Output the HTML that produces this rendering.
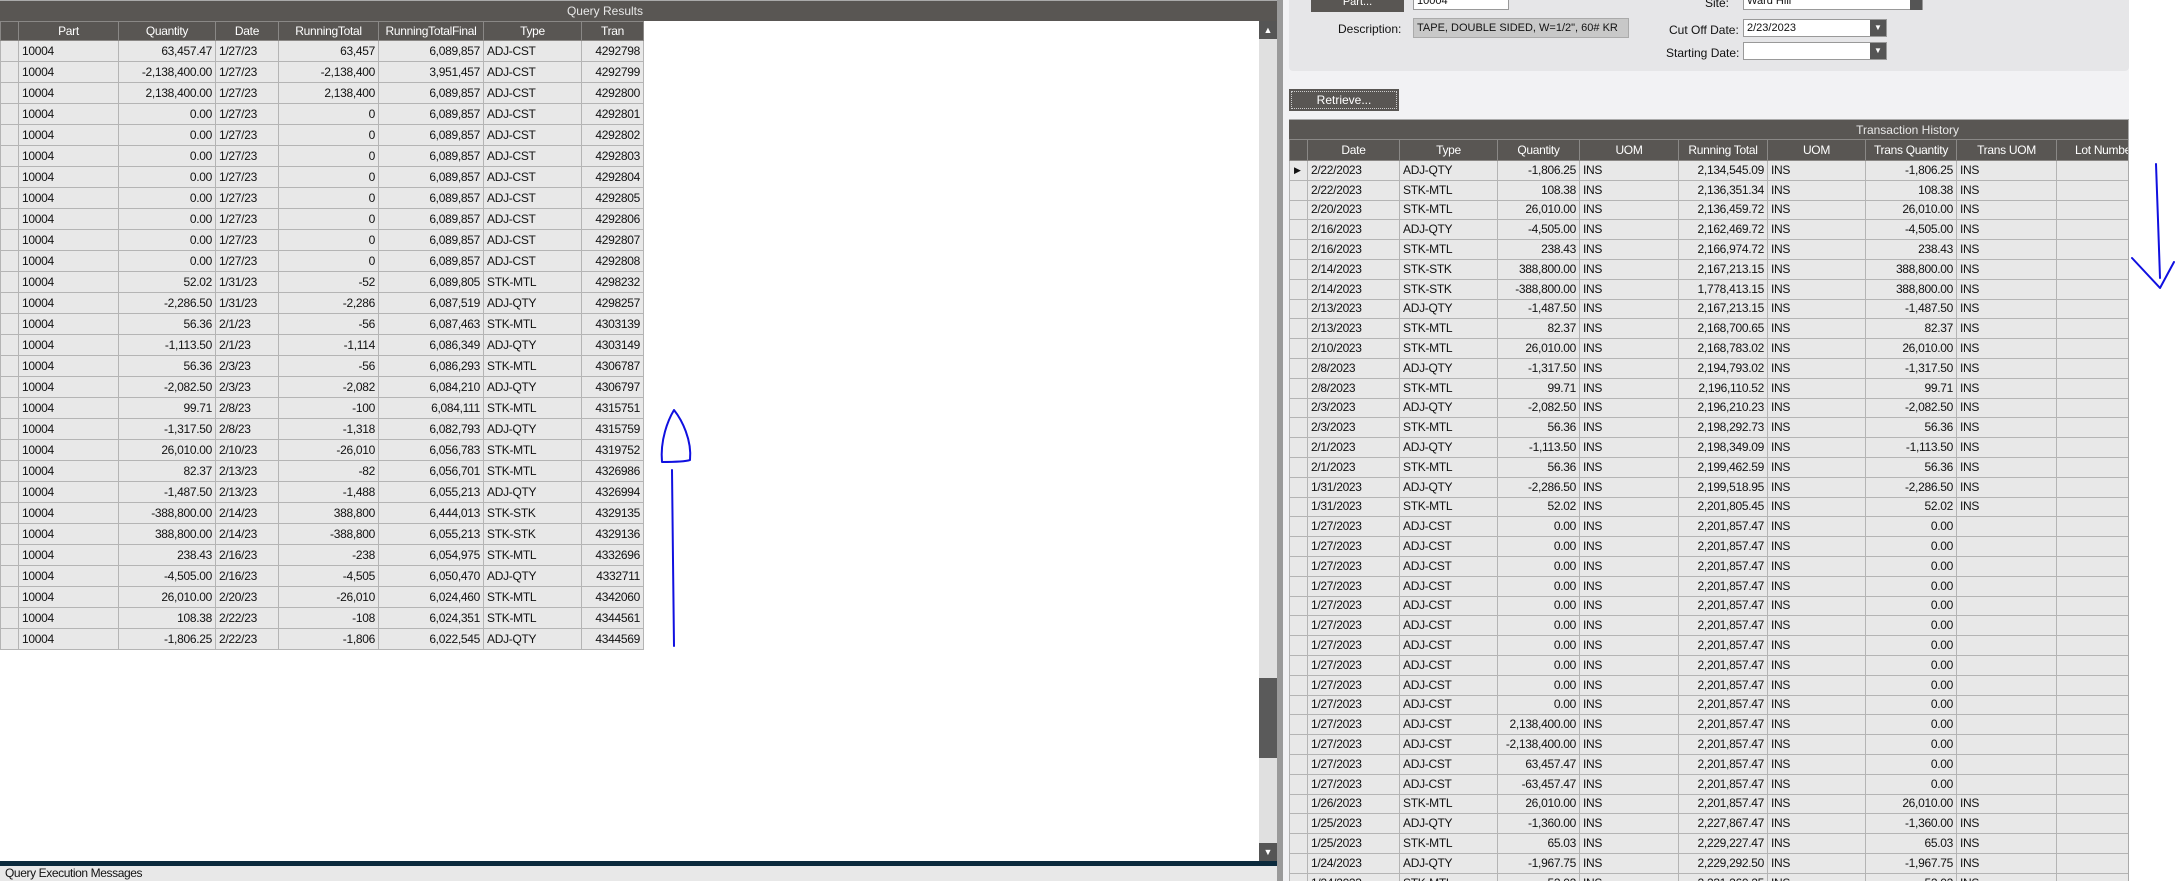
<!DOCTYPE html>
<html><head><meta charset="utf-8"><style>
*{margin:0;padding:0;box-sizing:border-box}
html,body{width:2178px;height:881px;overflow:hidden;background:#fff}
#w{position:relative;width:2178px;height:881px;overflow:hidden;font-family:"Liberation Sans",Arial,sans-serif;font-size:12px;color:#111}
.abs{position:absolute}
table{border-collapse:collapse;table-layout:fixed;position:absolute}
td,th{height:21px;line-height:18px;border:1px solid #b4b4b4;white-space:nowrap;overflow:hidden;padding:0 3px;font-weight:normal;letter-spacing:-0.3px}
th{background:#595653;color:#fff;border-color:#8a8886;text-align:center;height:19px;line-height:17px}
td{background:#e8e8e8}
td.r{text-align:right}
#rt td{height:19.8px;line-height:17px}
#rt th{height:21px}
.title{background:#595653;color:#e8e8e8;text-align:right;font-size:12px}
</style></head><body><div id="w">

<!-- LEFT PANEL -->
<div class="abs title" style="left:0;top:0;width:1278px;height:21px;line-height:21px;padding-right:635px;border-top:1px solid #aaa">Query Results</div>
<table style="left:0;top:21px;width:643px">
<colgroup><col style="width:18px"><col style="width:100px"><col style="width:97px"><col style="width:63px"><col style="width:100px"><col style="width:105px"><col style="width:98px"><col style="width:62px"></colgroup>
<tr><th style="border-right:none"></th><th>Part</th><th>Quantity</th><th>Date</th><th>RunningTotal</th><th>RunningTotalFinal</th><th>Type</th><th>Tran</th></tr>
<tr><td></td><td>10004</td><td class="r">63,457.47</td><td>1/27/23</td><td class="r">63,457</td><td class="r">6,089,857</td><td>ADJ-CST</td><td class="r">4292798</td></tr>
<tr><td></td><td>10004</td><td class="r">-2,138,400.00</td><td>1/27/23</td><td class="r">-2,138,400</td><td class="r">3,951,457</td><td>ADJ-CST</td><td class="r">4292799</td></tr>
<tr><td></td><td>10004</td><td class="r">2,138,400.00</td><td>1/27/23</td><td class="r">2,138,400</td><td class="r">6,089,857</td><td>ADJ-CST</td><td class="r">4292800</td></tr>
<tr><td></td><td>10004</td><td class="r">0.00</td><td>1/27/23</td><td class="r">0</td><td class="r">6,089,857</td><td>ADJ-CST</td><td class="r">4292801</td></tr>
<tr><td></td><td>10004</td><td class="r">0.00</td><td>1/27/23</td><td class="r">0</td><td class="r">6,089,857</td><td>ADJ-CST</td><td class="r">4292802</td></tr>
<tr><td></td><td>10004</td><td class="r">0.00</td><td>1/27/23</td><td class="r">0</td><td class="r">6,089,857</td><td>ADJ-CST</td><td class="r">4292803</td></tr>
<tr><td></td><td>10004</td><td class="r">0.00</td><td>1/27/23</td><td class="r">0</td><td class="r">6,089,857</td><td>ADJ-CST</td><td class="r">4292804</td></tr>
<tr><td></td><td>10004</td><td class="r">0.00</td><td>1/27/23</td><td class="r">0</td><td class="r">6,089,857</td><td>ADJ-CST</td><td class="r">4292805</td></tr>
<tr><td></td><td>10004</td><td class="r">0.00</td><td>1/27/23</td><td class="r">0</td><td class="r">6,089,857</td><td>ADJ-CST</td><td class="r">4292806</td></tr>
<tr><td></td><td>10004</td><td class="r">0.00</td><td>1/27/23</td><td class="r">0</td><td class="r">6,089,857</td><td>ADJ-CST</td><td class="r">4292807</td></tr>
<tr><td></td><td>10004</td><td class="r">0.00</td><td>1/27/23</td><td class="r">0</td><td class="r">6,089,857</td><td>ADJ-CST</td><td class="r">4292808</td></tr>
<tr><td></td><td>10004</td><td class="r">52.02</td><td>1/31/23</td><td class="r">-52</td><td class="r">6,089,805</td><td>STK-MTL</td><td class="r">4298232</td></tr>
<tr><td></td><td>10004</td><td class="r">-2,286.50</td><td>1/31/23</td><td class="r">-2,286</td><td class="r">6,087,519</td><td>ADJ-QTY</td><td class="r">4298257</td></tr>
<tr><td></td><td>10004</td><td class="r">56.36</td><td>2/1/23</td><td class="r">-56</td><td class="r">6,087,463</td><td>STK-MTL</td><td class="r">4303139</td></tr>
<tr><td></td><td>10004</td><td class="r">-1,113.50</td><td>2/1/23</td><td class="r">-1,114</td><td class="r">6,086,349</td><td>ADJ-QTY</td><td class="r">4303149</td></tr>
<tr><td></td><td>10004</td><td class="r">56.36</td><td>2/3/23</td><td class="r">-56</td><td class="r">6,086,293</td><td>STK-MTL</td><td class="r">4306787</td></tr>
<tr><td></td><td>10004</td><td class="r">-2,082.50</td><td>2/3/23</td><td class="r">-2,082</td><td class="r">6,084,210</td><td>ADJ-QTY</td><td class="r">4306797</td></tr>
<tr><td></td><td>10004</td><td class="r">99.71</td><td>2/8/23</td><td class="r">-100</td><td class="r">6,084,111</td><td>STK-MTL</td><td class="r">4315751</td></tr>
<tr><td></td><td>10004</td><td class="r">-1,317.50</td><td>2/8/23</td><td class="r">-1,318</td><td class="r">6,082,793</td><td>ADJ-QTY</td><td class="r">4315759</td></tr>
<tr><td></td><td>10004</td><td class="r">26,010.00</td><td>2/10/23</td><td class="r">-26,010</td><td class="r">6,056,783</td><td>STK-MTL</td><td class="r">4319752</td></tr>
<tr><td></td><td>10004</td><td class="r">82.37</td><td>2/13/23</td><td class="r">-82</td><td class="r">6,056,701</td><td>STK-MTL</td><td class="r">4326986</td></tr>
<tr><td></td><td>10004</td><td class="r">-1,487.50</td><td>2/13/23</td><td class="r">-1,488</td><td class="r">6,055,213</td><td>ADJ-QTY</td><td class="r">4326994</td></tr>
<tr><td></td><td>10004</td><td class="r">-388,800.00</td><td>2/14/23</td><td class="r">388,800</td><td class="r">6,444,013</td><td>STK-STK</td><td class="r">4329135</td></tr>
<tr><td></td><td>10004</td><td class="r">388,800.00</td><td>2/14/23</td><td class="r">-388,800</td><td class="r">6,055,213</td><td>STK-STK</td><td class="r">4329136</td></tr>
<tr><td></td><td>10004</td><td class="r">238.43</td><td>2/16/23</td><td class="r">-238</td><td class="r">6,054,975</td><td>STK-MTL</td><td class="r">4332696</td></tr>
<tr><td></td><td>10004</td><td class="r">-4,505.00</td><td>2/16/23</td><td class="r">-4,505</td><td class="r">6,050,470</td><td>ADJ-QTY</td><td class="r">4332711</td></tr>
<tr><td></td><td>10004</td><td class="r">26,010.00</td><td>2/20/23</td><td class="r">-26,010</td><td class="r">6,024,460</td><td>STK-MTL</td><td class="r">4342060</td></tr>
<tr><td></td><td>10004</td><td class="r">108.38</td><td>2/22/23</td><td class="r">-108</td><td class="r">6,024,351</td><td>STK-MTL</td><td class="r">4344561</td></tr>
<tr><td></td><td>10004</td><td class="r">-1,806.25</td><td>2/22/23</td><td class="r">-1,806</td><td class="r">6,022,545</td><td>ADJ-QTY</td><td class="r">4344569</td></tr>
</table>
<!-- scrollbar -->
<div class="abs" style="left:1259px;top:21px;width:18px;height:842px;background:#e0e0e0"></div>
<div class="abs" style="left:1259px;top:21px;width:18px;height:18px;background:#555;color:#fff;font-size:9px;text-align:center;line-height:18px">▲</div>
<div class="abs" style="left:1259px;top:678px;width:18px;height:80px;background:#5a5a5a"></div>
<div class="abs" style="left:1259px;top:843px;width:18px;height:18px;background:#555;color:#fff;font-size:9px;text-align:center;line-height:18px">▼</div>
<div class="abs" style="left:0;top:861px;width:1278px;height:5px;background:#0b2a3c"></div>
<div class="abs" style="left:0;top:866px;width:1278px;height:15px;background:#e8e8e8;font-size:12px;line-height:15px;padding-left:5px;letter-spacing:-0.4px">Query Execution Messages</div>

<!-- RIGHT PANEL -->
<div class="abs" style="left:1278px;top:0;width:900px;height:881px;background:#f2f2f4"></div>
<div class="abs" style="left:1277px;top:0;width:6px;height:881px;background:#9a9a9a"></div>
<div class="abs" style="left:1289px;top:0;width:840px;height:71px;background:#e6e6e8;border-radius:0 0 4px 4px"></div>
<div class="abs" style="left:1311px;top:0;width:93px;height:12px;background:#595653;color:#fff;text-align:center;font-size:11px;line-height:4px">Part...</div>
<div class="abs" style="left:1413px;top:-2px;width:96px;height:12px;background:#fff;border:1px solid #999;font-size:11px;line-height:4px;padding-left:3px">10004</div>
<div class="abs" style="left:1705px;top:-4px;font-size:12px">Site:</div>
<div class="abs" style="left:1743px;top:-2px;width:180px;height:12px;background:#fff;border:1px solid #999;font-size:11px;line-height:4px;padding-left:3px">Ward Hill</div>
<div class="abs" style="left:1910px;top:0;width:12px;height:10px;background:#555"></div>
<div class="abs" style="left:1338px;top:22px;font-size:12px">Description:</div>
<div class="abs" style="left:1413px;top:18px;width:216px;height:20px;background:#c8c8c8;border:1px solid #aaa;font-size:11px;line-height:18px;padding-left:3px">TAPE, DOUBLE SIDED, W=1/2", 60# KR</div>
<div class="abs" style="left:1669px;top:23px;font-size:12px">Cut Off Date:</div>
<div class="abs" style="left:1743px;top:19px;width:144px;height:18px;background:#fff;border:1px solid #999;font-size:11px;line-height:16px;padding-left:3px">2/23/2023</div>
<div class="abs" style="left:1870px;top:20px;width:16px;height:16px;background:#555;color:#fff;font-size:8px;text-align:center;line-height:16px">▼</div>
<div class="abs" style="left:1666px;top:46px;font-size:12px">Starting Date:</div>
<div class="abs" style="left:1743px;top:42px;width:144px;height:18px;background:#fff;border:1px solid #999"></div>
<div class="abs" style="left:1870px;top:43px;width:16px;height:16px;background:#555;color:#fff;font-size:8px;text-align:center;line-height:16px">▼</div>
<div class="abs" style="left:1289px;top:89px;width:110px;height:22px;background:#595653;color:#fff;text-align:center;font-size:12px;line-height:22px;outline:1px dotted #ccc;outline-offset:-3px">Retrieve...</div>
<div class="abs title" style="left:1289px;top:119px;width:840px;height:20px;line-height:20px;padding-right:170px;border-top:1px solid #aaa">Transaction History</div>
<div class="abs" style="left:1289px;top:139px;width:840px;height:742px;overflow:hidden">
<table id="rt" style="left:0;top:0;width:866px">
<colgroup><col style="width:18px"><col style="width:92px"><col style="width:98px"><col style="width:82px"><col style="width:99px"><col style="width:89px"><col style="width:98px"><col style="width:91px"><col style="width:100px"><col style="width:99px"></colgroup>
<tr><th style="border-right:none"></th><th>Date</th><th>Type</th><th>Quantity</th><th>UOM</th><th>Running Total</th><th>UOM</th><th>Trans Quantity</th><th>Trans UOM</th><th style="text-align:left;padding-left:18px">Lot Number</th></tr>
<tr><td style="font-size:9px;padding:0 4px">▶</td><td>2/22/2023</td><td>ADJ-QTY</td><td class="r">-1,806.25</td><td>INS</td><td class="r">2,134,545.09</td><td>INS</td><td class="r">-1,806.25</td><td>INS</td><td></td></tr>
<tr><td></td><td>2/22/2023</td><td>STK-MTL</td><td class="r">108.38</td><td>INS</td><td class="r">2,136,351.34</td><td>INS</td><td class="r">108.38</td><td>INS</td><td></td></tr>
<tr><td></td><td>2/20/2023</td><td>STK-MTL</td><td class="r">26,010.00</td><td>INS</td><td class="r">2,136,459.72</td><td>INS</td><td class="r">26,010.00</td><td>INS</td><td></td></tr>
<tr><td></td><td>2/16/2023</td><td>ADJ-QTY</td><td class="r">-4,505.00</td><td>INS</td><td class="r">2,162,469.72</td><td>INS</td><td class="r">-4,505.00</td><td>INS</td><td></td></tr>
<tr><td></td><td>2/16/2023</td><td>STK-MTL</td><td class="r">238.43</td><td>INS</td><td class="r">2,166,974.72</td><td>INS</td><td class="r">238.43</td><td>INS</td><td></td></tr>
<tr><td></td><td>2/14/2023</td><td>STK-STK</td><td class="r">388,800.00</td><td>INS</td><td class="r">2,167,213.15</td><td>INS</td><td class="r">388,800.00</td><td>INS</td><td></td></tr>
<tr><td></td><td>2/14/2023</td><td>STK-STK</td><td class="r">-388,800.00</td><td>INS</td><td class="r">1,778,413.15</td><td>INS</td><td class="r">388,800.00</td><td>INS</td><td></td></tr>
<tr><td></td><td>2/13/2023</td><td>ADJ-QTY</td><td class="r">-1,487.50</td><td>INS</td><td class="r">2,167,213.15</td><td>INS</td><td class="r">-1,487.50</td><td>INS</td><td></td></tr>
<tr><td></td><td>2/13/2023</td><td>STK-MTL</td><td class="r">82.37</td><td>INS</td><td class="r">2,168,700.65</td><td>INS</td><td class="r">82.37</td><td>INS</td><td></td></tr>
<tr><td></td><td>2/10/2023</td><td>STK-MTL</td><td class="r">26,010.00</td><td>INS</td><td class="r">2,168,783.02</td><td>INS</td><td class="r">26,010.00</td><td>INS</td><td></td></tr>
<tr><td></td><td>2/8/2023</td><td>ADJ-QTY</td><td class="r">-1,317.50</td><td>INS</td><td class="r">2,194,793.02</td><td>INS</td><td class="r">-1,317.50</td><td>INS</td><td></td></tr>
<tr><td></td><td>2/8/2023</td><td>STK-MTL</td><td class="r">99.71</td><td>INS</td><td class="r">2,196,110.52</td><td>INS</td><td class="r">99.71</td><td>INS</td><td></td></tr>
<tr><td></td><td>2/3/2023</td><td>ADJ-QTY</td><td class="r">-2,082.50</td><td>INS</td><td class="r">2,196,210.23</td><td>INS</td><td class="r">-2,082.50</td><td>INS</td><td></td></tr>
<tr><td></td><td>2/3/2023</td><td>STK-MTL</td><td class="r">56.36</td><td>INS</td><td class="r">2,198,292.73</td><td>INS</td><td class="r">56.36</td><td>INS</td><td></td></tr>
<tr><td></td><td>2/1/2023</td><td>ADJ-QTY</td><td class="r">-1,113.50</td><td>INS</td><td class="r">2,198,349.09</td><td>INS</td><td class="r">-1,113.50</td><td>INS</td><td></td></tr>
<tr><td></td><td>2/1/2023</td><td>STK-MTL</td><td class="r">56.36</td><td>INS</td><td class="r">2,199,462.59</td><td>INS</td><td class="r">56.36</td><td>INS</td><td></td></tr>
<tr><td></td><td>1/31/2023</td><td>ADJ-QTY</td><td class="r">-2,286.50</td><td>INS</td><td class="r">2,199,518.95</td><td>INS</td><td class="r">-2,286.50</td><td>INS</td><td></td></tr>
<tr><td></td><td>1/31/2023</td><td>STK-MTL</td><td class="r">52.02</td><td>INS</td><td class="r">2,201,805.45</td><td>INS</td><td class="r">52.02</td><td>INS</td><td></td></tr>
<tr><td></td><td>1/27/2023</td><td>ADJ-CST</td><td class="r">0.00</td><td>INS</td><td class="r">2,201,857.47</td><td>INS</td><td class="r">0.00</td><td></td><td></td></tr>
<tr><td></td><td>1/27/2023</td><td>ADJ-CST</td><td class="r">0.00</td><td>INS</td><td class="r">2,201,857.47</td><td>INS</td><td class="r">0.00</td><td></td><td></td></tr>
<tr><td></td><td>1/27/2023</td><td>ADJ-CST</td><td class="r">0.00</td><td>INS</td><td class="r">2,201,857.47</td><td>INS</td><td class="r">0.00</td><td></td><td></td></tr>
<tr><td></td><td>1/27/2023</td><td>ADJ-CST</td><td class="r">0.00</td><td>INS</td><td class="r">2,201,857.47</td><td>INS</td><td class="r">0.00</td><td></td><td></td></tr>
<tr><td></td><td>1/27/2023</td><td>ADJ-CST</td><td class="r">0.00</td><td>INS</td><td class="r">2,201,857.47</td><td>INS</td><td class="r">0.00</td><td></td><td></td></tr>
<tr><td></td><td>1/27/2023</td><td>ADJ-CST</td><td class="r">0.00</td><td>INS</td><td class="r">2,201,857.47</td><td>INS</td><td class="r">0.00</td><td></td><td></td></tr>
<tr><td></td><td>1/27/2023</td><td>ADJ-CST</td><td class="r">0.00</td><td>INS</td><td class="r">2,201,857.47</td><td>INS</td><td class="r">0.00</td><td></td><td></td></tr>
<tr><td></td><td>1/27/2023</td><td>ADJ-CST</td><td class="r">0.00</td><td>INS</td><td class="r">2,201,857.47</td><td>INS</td><td class="r">0.00</td><td></td><td></td></tr>
<tr><td></td><td>1/27/2023</td><td>ADJ-CST</td><td class="r">0.00</td><td>INS</td><td class="r">2,201,857.47</td><td>INS</td><td class="r">0.00</td><td></td><td></td></tr>
<tr><td></td><td>1/27/2023</td><td>ADJ-CST</td><td class="r">0.00</td><td>INS</td><td class="r">2,201,857.47</td><td>INS</td><td class="r">0.00</td><td></td><td></td></tr>
<tr><td></td><td>1/27/2023</td><td>ADJ-CST</td><td class="r">2,138,400.00</td><td>INS</td><td class="r">2,201,857.47</td><td>INS</td><td class="r">0.00</td><td></td><td></td></tr>
<tr><td></td><td>1/27/2023</td><td>ADJ-CST</td><td class="r">-2,138,400.00</td><td>INS</td><td class="r">2,201,857.47</td><td>INS</td><td class="r">0.00</td><td></td><td></td></tr>
<tr><td></td><td>1/27/2023</td><td>ADJ-CST</td><td class="r">63,457.47</td><td>INS</td><td class="r">2,201,857.47</td><td>INS</td><td class="r">0.00</td><td></td><td></td></tr>
<tr><td></td><td>1/27/2023</td><td>ADJ-CST</td><td class="r">-63,457.47</td><td>INS</td><td class="r">2,201,857.47</td><td>INS</td><td class="r">0.00</td><td></td><td></td></tr>
<tr><td></td><td>1/26/2023</td><td>STK-MTL</td><td class="r">26,010.00</td><td>INS</td><td class="r">2,201,857.47</td><td>INS</td><td class="r">26,010.00</td><td>INS</td><td></td></tr>
<tr><td></td><td>1/25/2023</td><td>ADJ-QTY</td><td class="r">-1,360.00</td><td>INS</td><td class="r">2,227,867.47</td><td>INS</td><td class="r">-1,360.00</td><td>INS</td><td></td></tr>
<tr><td></td><td>1/25/2023</td><td>STK-MTL</td><td class="r">65.03</td><td>INS</td><td class="r">2,229,227.47</td><td>INS</td><td class="r">65.03</td><td>INS</td><td></td></tr>
<tr><td></td><td>1/24/2023</td><td>ADJ-QTY</td><td class="r">-1,967.75</td><td>INS</td><td class="r">2,229,292.50</td><td>INS</td><td class="r">-1,967.75</td><td>INS</td><td></td></tr>
<tr><td></td><td>1/24/2023</td><td>STK-MTL</td><td class="r">52.02</td><td>INS</td><td class="r">2,231,260.25</td><td>INS</td><td class="r">52.02</td><td>INS</td><td></td></tr>
</table>
</div>
<div class="abs" style="left:2129px;top:0;width:49px;height:881px;background:#fff"></div>
<div class="abs" style="left:2128px;top:119px;width:1px;height:762px;background:#aaa"></div>

<!-- blue annotations -->
<svg class="abs" style="left:0;top:0" width="2178" height="881">
<g fill="none" stroke="#1010e0" stroke-width="2" stroke-linecap="round" stroke-linejoin="round">
<path d="M674 646 L673 560 L672 470"/>
<path d="M662 462 C660 440 668 420 674 410 C682 420 692 440 690 460 C684 462 670 462 662 462 Z"/>
<path d="M2156 164 L2158 220 L2160 278"/>
<path d="M2132 258 L2160 288 L2174 262"/>
</g>
</svg>
</div></body></html>
